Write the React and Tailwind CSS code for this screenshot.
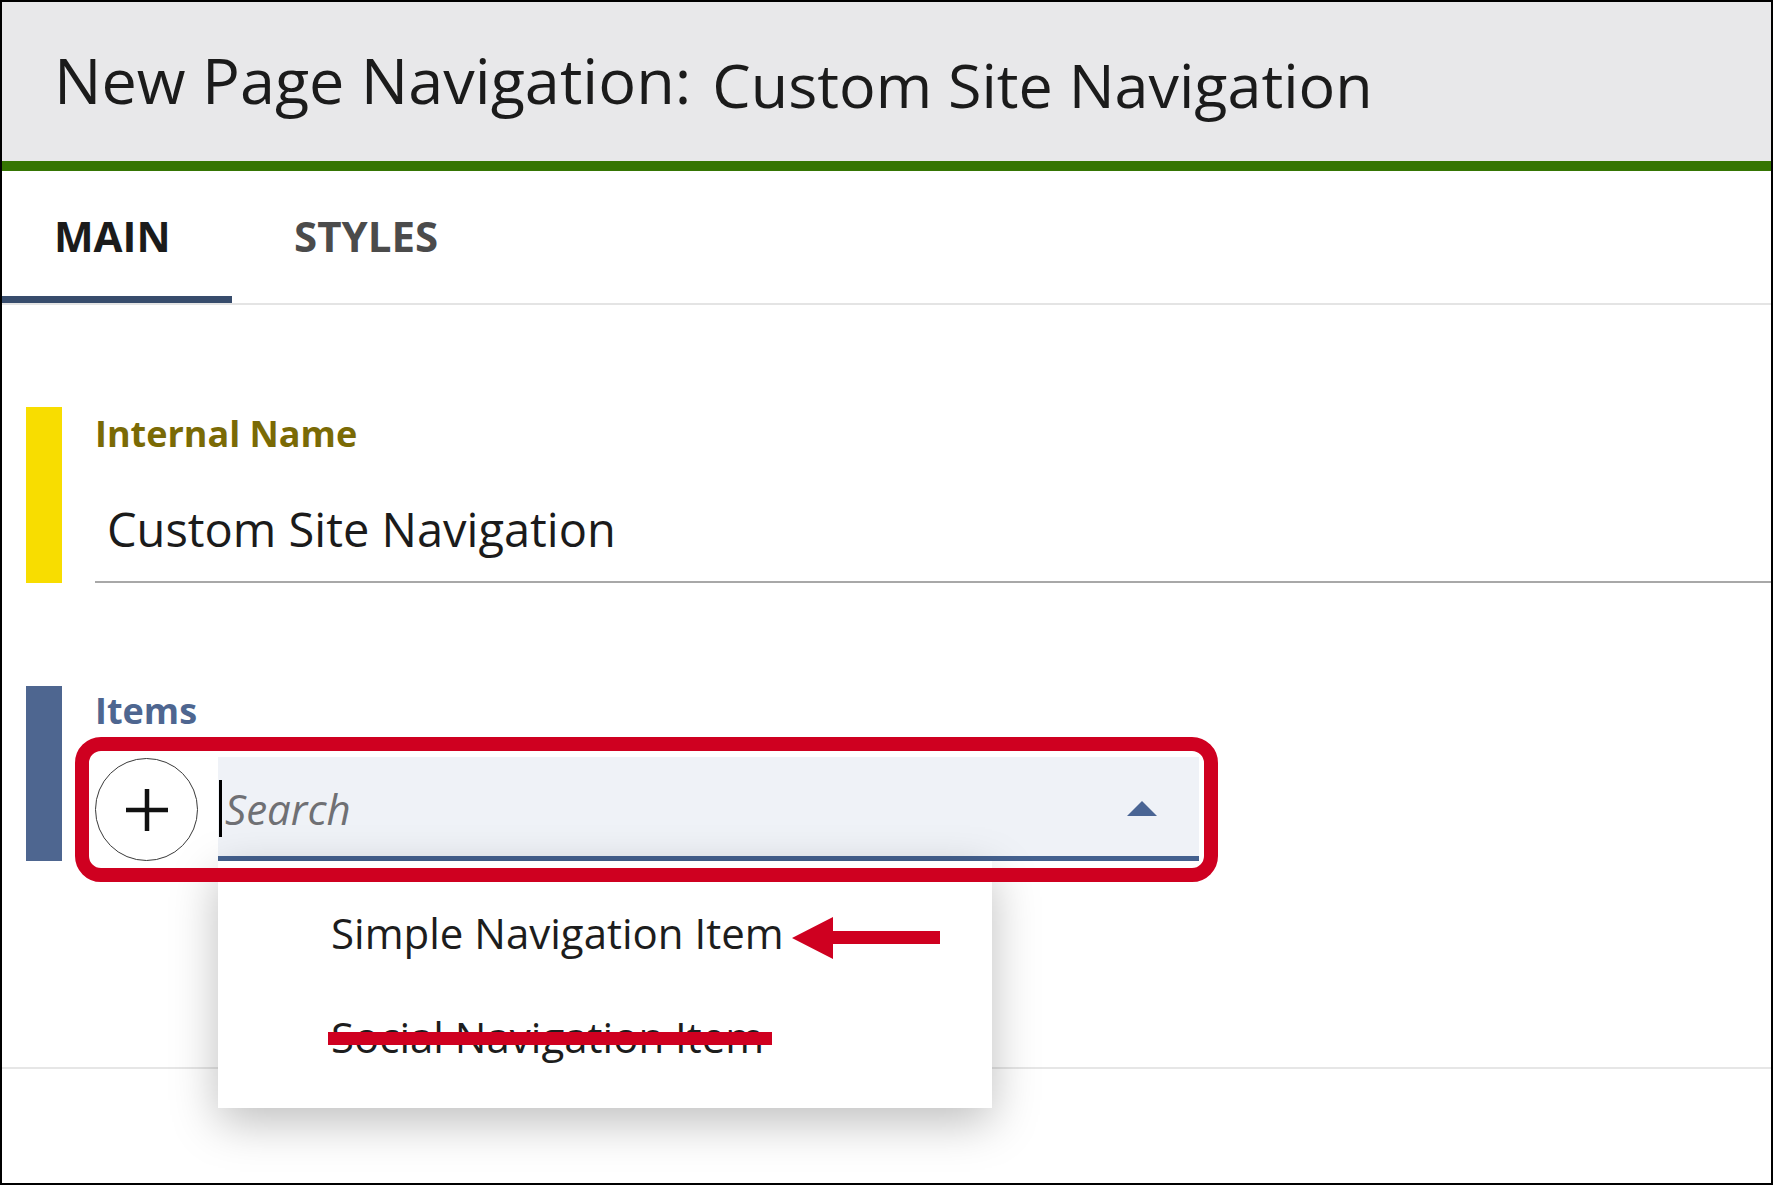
import React from "react";

function Tab({ label, active, className }) {
  return (
    <div
      className={`h-full pt-[44px] box-border ${className} ${
        active ? "border-b-[7px] border-[#374c6c] text-[#1b1b1b]" : "text-[#4b4b4b]"
      }`}
    >
      <span className="block text-[42px] leading-none font-bold">{label}</span>
    </div>
  );
}

function FieldBar({ color, children, className = "" }) {
  return (
    <div className={`flex items-stretch pl-[24px] ${className}`}>
      <div className={`w-[36px] shrink-0 ${color}`} />
      <div className="ml-[33px] flex-1 min-w-0">{children}</div>
    </div>
  );
}

function PlusButton() {
  return (
    <button className="w-[103px] h-[103px] mt-[1px] shrink-0 rounded-full border-[1.5px] border-[#3a3a3a] bg-white flex items-center justify-center">
      <svg width="44" height="44" viewBox="0 0 44 44">
        <path d="M22 1 V43 M1 22 H43" stroke="#111" strokeWidth="4.5" fill="none" />
      </svg>
    </button>
  );
}

function SearchBox() {
  return (
    <div className="relative w-[981px] h-[104px] bg-[#eff2f7] border-b-[5px] border-[#44618f] box-border flex items-start">
      <div className="w-[3px] h-[57px] mt-[23px] ml-[1px] bg-black" />
      <span className="ml-[3px] mt-[31px] text-[42px] leading-none italic text-[#6f7074]">Search</span>
      <svg className="ml-auto mr-[42px] mt-[44px]" width="30" height="15" viewBox="0 0 30 15">
        <path d="M15 0 L30 15 L0 15 Z" fill="#4a6594" />
      </svg>

      {/* open options list */}
      <div className="absolute left-0 top-[104px] z-10 w-[774px] h-[247px] bg-white shadow-[0_14px_44px_rgba(0,0,0,0.26)] pl-[113px] pt-[51px] text-[42px] leading-none text-[#1d1d1d]">
        <div className="h-[104px]">Simple Navigation Item</div>
        <div>Social Navigation Item</div>
      </div>
    </div>
  );
}

export default function App() {
  return (
    <div className="relative w-[1773px] h-[1185px] box-border border-2 border-black bg-white overflow-hidden font-['Open_Sans',sans-serif] text-[#1b1b1b]">
      {/* title bar */}
      <header className="h-[159px] bg-[#e8e8ea] pl-[52px] pt-[46px] box-border flex items-start">
        <span className="text-[63px] leading-none">New Page Navigation:</span>
        <span className="ml-[21px] mt-[6px] text-[61px] leading-none">Custom Site Navigation</span>
      </header>
      <div className="h-[10px] bg-[#357503]" />

      {/* tabs */}
      <nav className="flex h-[134px] box-border border-b-2 border-[#e4e4e4]">
        <Tab label="MAIN" active className="w-[230px] pl-[52px]" />
        <Tab label="STYLES" className="pl-[62px]" />
      </nav>

      {/* Internal Name */}
      <FieldBar color="bg-[#f8dd00]" className="mt-[102px]">
        <div className="pt-[9px] text-[36px] leading-none font-bold text-[#7a6a05]">Internal Name</div>
        <div className="mt-[54px] pl-[12px] pb-[28px] text-[47px] leading-none border-b-2 border-[#a8a8a8]">
          Custom Site Navigation
        </div>
      </FieldBar>

      {/* Items */}
      <FieldBar color="bg-[#4e6690]" className="mt-[103px]">
        <div className="pt-[7px] text-[36px] leading-none font-bold text-[#4e6690]">Items</div>
        <div className="mt-[28px] flex items-start gap-[20px]">
          <PlusButton />
          <SearchBox />
        </div>
      </FieldBar>

      <div className="mt-[206px] h-[2px] bg-[#e6e6e6]" />

      {/* markup drawn over the form */}
      <div className="absolute left-[73px] top-[735px] z-20 w-[1143px] h-[145px] box-border border-[14px] border-[#cf0020] rounded-[26px]" />
      <svg className="absolute left-[788px] top-[913px] z-20" width="152" height="45" viewBox="0 0 152 45">
        <path d="M2 23 L43 2 L43 16 L150 16 L150 29 L43 29 L43 44 Z" fill="#cf0020" />
      </svg>
      <div className="absolute left-[326px] top-[1030px] z-20 w-[444px] h-[13px] bg-[#cf0020]" />
    </div>
  );
}
